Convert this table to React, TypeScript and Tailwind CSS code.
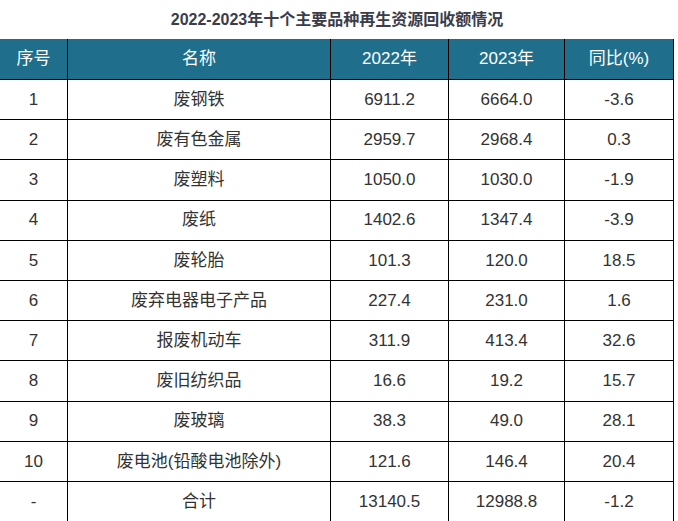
import React from "react"

const rows = [
  ["1", "废钢铁", "6911.2", "6664.0", "-3.6"],
  ["2", "废有色金属", "2959.7", "2968.4", "0.3"],
  ["3", "废塑料", "1050.0", "1030.0", "-1.9"],
  ["4", "废纸", "1402.6", "1347.4", "-3.9"],
  ["5", "废轮胎", "101.3", "120.0", "18.5"],
  ["6", "废弃电器电子产品", "227.4", "231.0", "1.6"],
  ["7", "报废机动车", "311.9", "413.4", "32.6"],
  ["8", "废旧纺织品", "16.6", "19.2", "15.7"],
  ["9", "废玻璃", "38.3", "49.0", "28.1"],
  ["10", "废电池(铅酸电池除外)", "121.6", "146.4", "20.4"],
  ["-", "合计", "13140.5", "12988.8", "-1.2"],
]

const headers = ["序号", "名称", "2022年", "2023年", "同比(%)"]

const cols = "grid grid-cols-[68px_263px_118px_116px_109px]"

export default function App() {
  return (
    <div
      className="w-[678px] h-[521px] overflow-hidden bg-white"
      style={{ fontFamily: '"Liberation Sans", "Noto Sans CJK SC", sans-serif' }}
    >
      <h1 className="h-[39px] flex items-center justify-center pr-[4px] text-[16px] font-bold text-[#3b3d4a]">
        2022-2023年十个主要品种再生资源回收额情况
      </h1>
      <div className="w-[674px]">
        <div className={`${cols} h-[41px] bg-[#1f6e8c] text-white text-[17px]`}>
          {headers.map((h) => (
            <div
              key={h}
              className="flex items-center justify-center border-r border-b border-black"
            >
              {h}
            </div>
          ))}
        </div>
        {rows.map((r) => (
          <div key={r[0]} className={`${cols} h-[40.2px] text-[17px] text-[#333]`}>
            {r.map((c, i) => (
              <div
                key={i}
                className="flex items-center justify-center border-r border-b border-black"
              >
                {c}
              </div>
            ))}
          </div>
        ))}
      </div>
    </div>
  )
}
